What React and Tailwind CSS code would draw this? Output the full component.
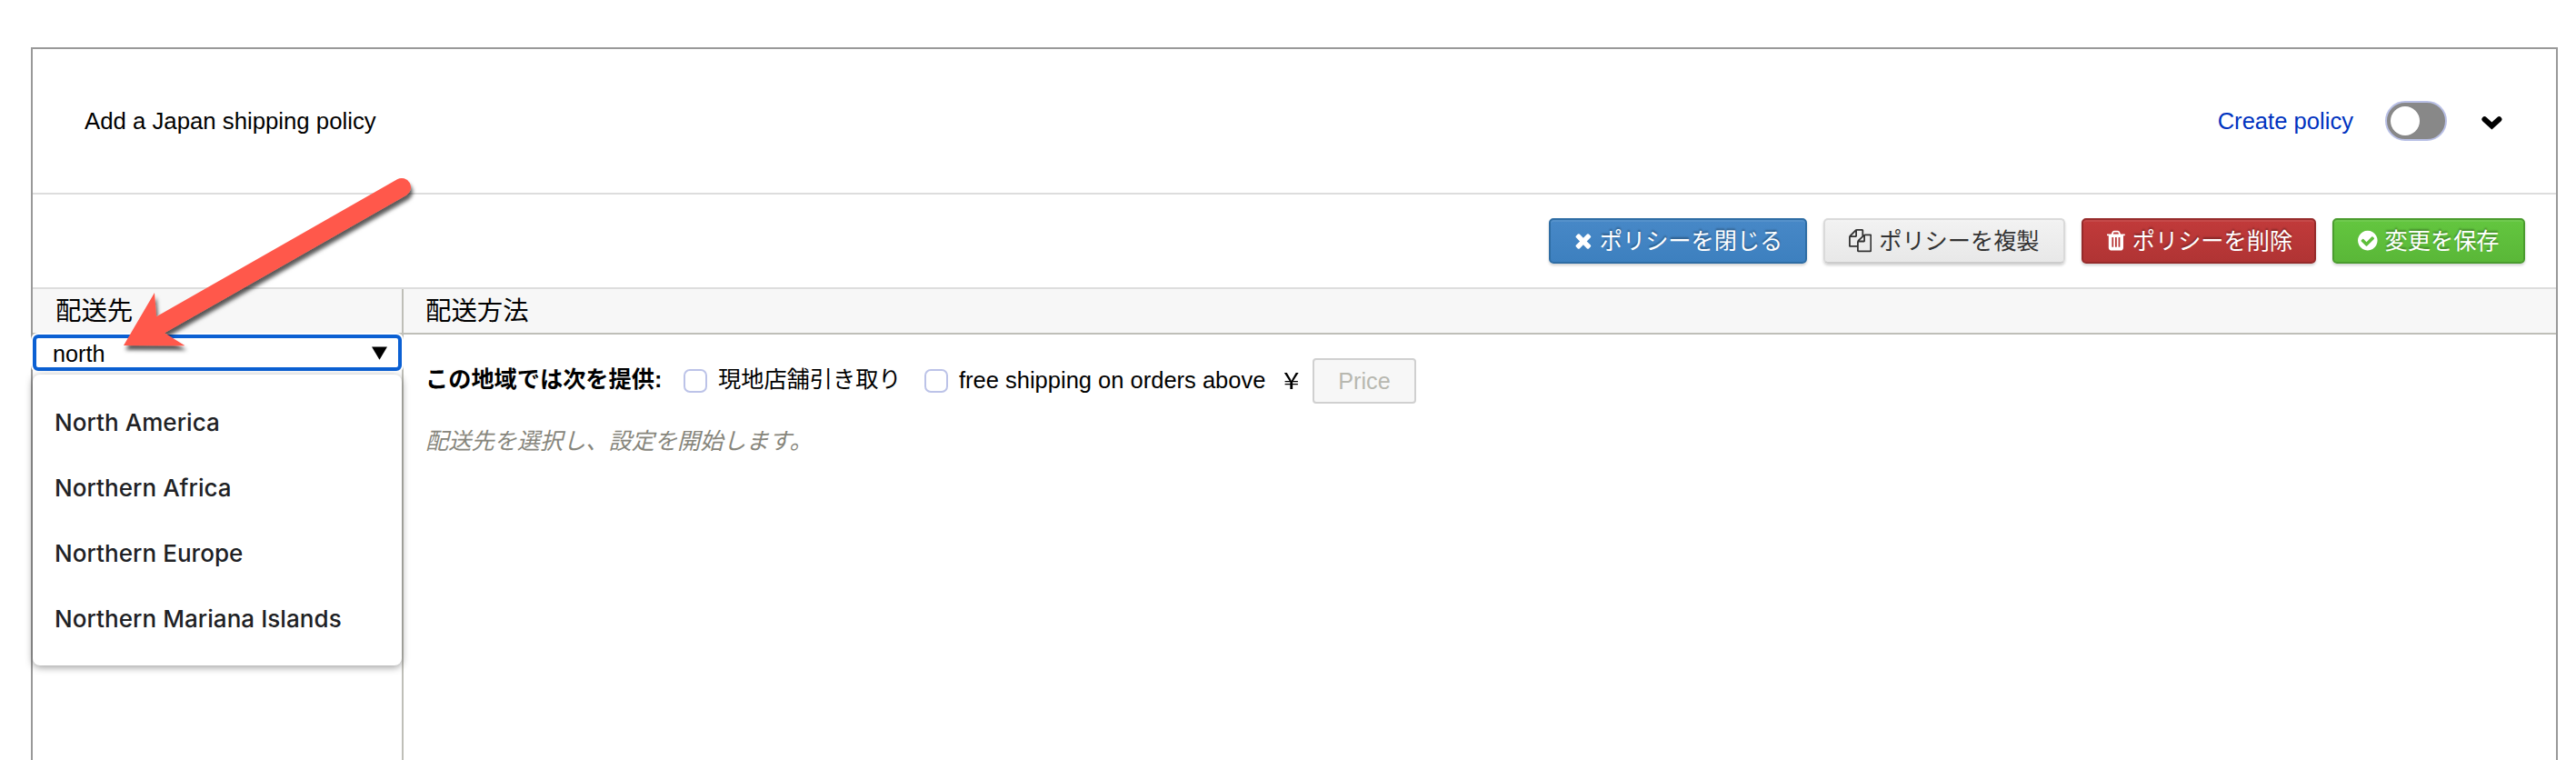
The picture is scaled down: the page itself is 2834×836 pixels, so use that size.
const iconPaths = {
  close: {
    box: "192 0 1408 1792",
    d: "M1490 1322q0 40-28 68l-136 136q-28 28-68 28t-68-28l-294-294-294 294q-28 28-68 28t-68-28l-136-136q-28-28-28-68t28-68l294-294-294-294q-28-28-28-68t28-68l136-136q28-28 68-28t68 28l294 294 294-294q28-28 68-28t68 28l136 136q28 28 28 68t-28 68l-294 294 294 294q28 28 28 68z",
  },
  copy: {
    box: "0 0 1792 1792",
    d: "M1696 384q40 0 68 28t28 68v1216q0 40-28 68t-68 28h-960q-40 0-68-28t-28-68v-288h-544q-40 0-68-28t-28-68v-672q0-40 20-88t48-76l408-408q28-28 76-48t88-20h416q40 0 68 28t28 68v328q68-40 128-40h416zm-544 213l-299 299h299v-299zm-640-384l-299 299h299v-299zm196 647l316-316v-416h-384v416q0 40-28 68t-68 28h-416v640h512v-256q0-40 20-88t48-76zm956 804v-1152h-384v416q0 40-28 68t-68 28h-416v640h896z",
  },
  trash: {
    box: "192 0 1408 1792",
    d: "M704 1376v-704q0-14-9-23t-23-9h-64q-14 0-23 9t-9 23v704q0 14 9 23t23 9h64q14 0 23-9t9-23zm256 0v-704q0-14-9-23t-23-9h-64q-14 0-23 9t-9 23v704q0 14 9 23t23 9h64q14 0 23-9t9-23zm256 0v-704q0-14-9-23t-23-9h-64q-14 0-23 9t-9 23v704q0 14 9 23t23 9h64q14 0 23-9t9-23zm-544-992h448l-48-117q-7-9-17-11h-317q-10 2-17 11zm928 32v64q0 14-9 23t-23 9h-96v948q0 83-47 143.5t-113 60.5h-832q-66 0-113-58.5t-47-141.5v-952h-96q-14 0-23-9t-9-23v-64q0-14 9-23t23-9h309l70-167q15-37 54-63t79-26h320q40 0 79 26t54 63l70 167h309q14 0 23 9t9 23z",
  },
  check: {
    box: "128 0 1536 1792",
    d: "M1412 734q0-28-18-46l-91-90q-19-19-45-19t-45 19l-408 407-226-226q-19-19-45-19t-45 19l-91 90q-18 18-18 46 0 27 18 45l362 362q19 19 45 19 27 0 46-19l543-543q18-18 18-45zm252 162q0 209-103 385.5t-279.5 279.5-385.5 103-385.5-103-279.5-279.5-103-385.5 103-385.5 279.5-279.5 385.5-103 385.5 103 279.5 279.5 103 385.5z",
  },
};

const buttons = [
  {
    icon: "close",
    label: "ポリシーを閉じる",
    style:
      "w-[284px] border-[#2e6da4] bg-linear-to-b from-[#4788c7] to-[#3d80bf] text-white [text-shadow:0_-2px_2px_rgba(0,0,0,0.3)]",
  },
  {
    icon: "copy",
    label: "ポリシーを複製",
    style: "w-[266px] border-[#dadada] border-b-[#cccccc] bg-linear-to-b from-[#f2f2f2] to-[#e8e8e8] text-[#333333]",
  },
  {
    icon: "trash",
    label: "ポリシーを削除",
    style:
      "w-[258px] border-[#962b2b] bg-linear-to-b from-[#c13a3a] to-[#b03434] text-white [text-shadow:0_-2px_2px_rgba(0,0,0,0.3)]",
  },
  {
    icon: "check",
    label: "変更を保存",
    style:
      "w-[212px] border-[#4a9c2e] bg-linear-to-b from-[#63c63f] to-[#5ab738] text-white [text-shadow:0_-2px_2px_rgba(0,0,0,0.3)]",
  },
];

const regions = ["North America", "Northern Africa", "Northern Europe", "Northern Mariana Islands"];

function ActionButton({ icon, label, style }) {
  return (
    <button
      className={`flex h-[50px] items-center gap-[8px] rounded-[5px] border-2 pl-[26px] whitespace-nowrap shadow-[inset_0_2px_0_rgba(255,255,255,0.08),0_2px_3px_rgba(0,0,0,0.18)] ${style}`}
    >
      <svg viewBox={iconPaths[icon].box} className="h-[25.2px] shrink-0 fill-current">
        <path d={iconPaths[icon].d} />
      </svg>
      <span className="text-[25.2px] leading-[36px]">{label}</span>
    </button>
  );
}

function Checkbox() {
  return (
    <span
      role="checkbox"
      aria-checked="false"
      className="block size-[26px] shrink-0 rounded-[7px] border-2 border-[#bcc3e8] bg-white"
    />
  );
}

function Arrow() {
  return (
    <svg className="pointer-events-none absolute top-[180px] left-[120px] z-20" width="350" height="230" viewBox="120 180 350 230">
      <defs>
        <filter id="arrow-shadow" x="-10%" y="-10%" width="120%" height="130%">
          <feDropShadow dx="2" dy="5" stdDeviation="2.2" floodColor="#000" floodOpacity="0.65" />
        </filter>
      </defs>
      <path
        d="M136 380L170 322L172 348.3L437 197.3A10 10 0 0 1 447 214.7L181 366.3L203.5 380.3Z"
        fill="#ff594b"
        filter="url(#arrow-shadow)"
      />
    </svg>
  );
}

export default function App() {
  return (
    <div className="relative h-[836px] w-[2834px] overflow-hidden bg-white pt-[52px] pl-[34px] font-['Liberation_Sans','Noto_Sans_CJK_JP',sans-serif] text-black">
      <main className="flex h-[784px] w-[2780px] flex-col border-x-2 border-t-2 border-[#999999]">
        <header className="flex h-[160px] shrink-0 items-center border-b-2 border-[#dddddd] pl-[57px]">
          <h1 className="text-[25.75px] leading-[32px] whitespace-nowrap">Add a Japan shipping policy</h1>
          <div className="ml-auto flex items-center pr-[59px]">
            <a className="text-[25.6px] leading-[32px] whitespace-nowrap text-[#0033bf]">Create policy</a>
            <span
              role="switch"
              aria-checked="false"
              className="ml-[35px] flex h-[44px] w-[68px] items-center rounded-full border-2 border-[#b9c0e6] bg-[#888888] pl-1"
            >
              <span className="block size-8 rounded-full bg-white" />
            </span>
            <svg className="mt-[3px] ml-[38px]" width="23" height="16" viewBox="0 0 23 16">
              <path d="M3.4 4.2L11.4 11.4L19.4 4.2" fill="none" stroke="#000" strokeWidth="6" strokeLinejoin="miter" strokeLinecap="round" />
            </svg>
          </div>
        </header>

        <div className="flex h-[104px] shrink-0 items-center justify-end gap-[18px] border-b-2 border-[#dddddd] pr-[34px]">
          {buttons.map((b) => (
            <ActionButton key={b.icon} {...b} />
          ))}
        </div>

        <div className="flex grow">
          <aside className="relative w-[408px] shrink-0 border-r-2 border-[#bfbfb8]">
            <h2 className="flex h-[50px] items-center border-b-2 border-[#bfbfb8] bg-[#f7f7f7] pl-[25px] text-[28.4px] leading-[40px]">
              配送先
            </h2>
            <div className="flex h-10 items-center rounded-[6px] border-4 border-[#0b60d3] bg-white pr-[12px] pl-[18px] shadow-[0_0_0_2px_#ffffff]">
              <span className="grow pt-[2px] text-[25.2px] leading-[30px]">north</span>
              <svg width="17" height="15" viewBox="0 0 17 15">
                <path d="M0 0.5H17L8.5 14.8Z" />
              </svg>
            </div>
            <ul className="absolute top-[94px] left-0 flex h-[320px] w-[406px] flex-col rounded-lg bg-white pt-4 font-['Inter',sans-serif] shadow-[0_2px_8px_rgba(0,0,0,0.4)]">
              {regions.map((r) => (
                <li
                  key={r}
                  className="flex h-[72px] items-center pl-6 text-[26px] font-medium tracking-[0.06px] whitespace-nowrap text-[#202124]"
                >
                  {r}
                </li>
              ))}
            </ul>
          </aside>

          <section className="grow">
            <h2 className="flex h-[50px] items-center border-b-2 border-[#bfbfb8] bg-[#f7f7f7] pl-[24px] text-[28.4px] leading-[40px]">
              配送方法
            </h2>
            <div className="mt-[26px] flex h-[50px] items-center pl-[24px] text-[25.2px] leading-[36px] whitespace-nowrap">
              <strong className="w-[284px] pb-[4px]">この地域では次を提供:</strong>
              <Checkbox />
              <span className="ml-[12px] w-[227px] pb-[4px]">現地店舗引き取り</span>
              <Checkbox />
              <span className="ml-[12px] w-[357px] pb-[3px] text-[25.5px]">free shipping on orders above</span>
              <span className="w-[32px] pb-[3px]">
                <span className="inline-block origin-left scale-x-125 font-['Noto_Sans_CJK_JP',sans-serif] leading-[36px]">¥</span>
              </span>
              <span className="flex h-[50px] w-[114px] items-center justify-center rounded-[4px] border-2 border-[#d0d0d0] bg-[#f7f7f7] text-[#b8b8b0]">
                Price
              </span>
            </div>
            <p className="mt-[23px] pl-[24px] text-[25.2px] leading-[36px] text-[#87867c] italic">
              配送先を選択し、設定を開始します。
            </p>
          </section>
        </div>
      </main>
      <Arrow />
    </div>
  );
}
